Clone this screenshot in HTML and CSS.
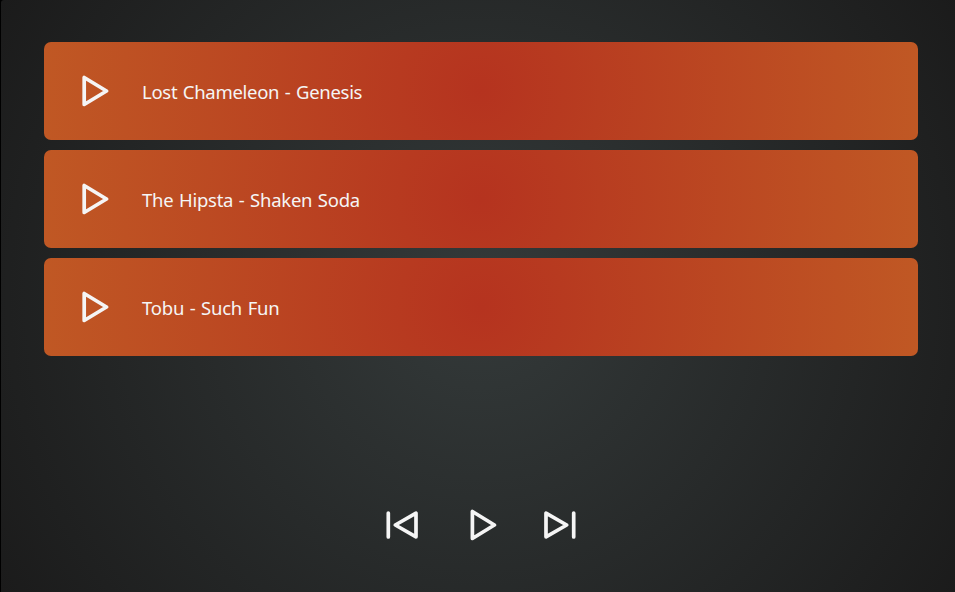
FILE: index.html
```html
<!DOCTYPE html>
<html lang="en">
<head>
<meta charset="utf-8">
<title>Music player</title>
<link rel="stylesheet" href="styles.css">
</head>
<body>
<main class="player">
  <ul class="tracks">
    <li class="track">
      <svg class="icon" viewBox="0 0 32 32"><path d="M4.2 2.5V29.5L26.5 16Z"/></svg>
      <span class="title title-genesis">Lost Chameleon - Genesis</span>
    </li>
    <li class="track">
      <svg class="icon" viewBox="0 0 32 32"><path d="M4.2 2.5V29.5L26.5 16Z"/></svg>
      <span class="title title-soda">The Hipsta - Shaken Soda</span>
    </li>
    <li class="track">
      <svg class="icon" viewBox="0 0 32 32"><path d="M4.2 2.5V29.5L26.5 16Z"/></svg>
      <span class="title title-fun">Tobu - Such Fun</span>
    </li>
  </ul>
  <div class="controls">
    <svg class="icon" viewBox="0 0 32 32"><path d="M2.3 4V28M30 4.2V27.8L9.3 16Z"/></svg>
    <svg class="icon" viewBox="0 0 32 32"><path d="M7.4 2.5V29.5L29.4 16Z"/></svg>
    <svg class="icon" viewBox="0 0 32 32"><path d="M29.7 4V28M2 4.2V27.8L22.7 16Z"/></svg>
  </div>
</main>
</body>
</html>
```
FILE: styles.css
```css
* { box-sizing: border-box; }
body {
  margin: 0;
  background: #000;
  font-family: "Segoe UI", "Noto Sans", "Open Sans", sans-serif;
}
.player {
  height: 592px;
  margin-left: 1px;
  padding: 42px 37px 0 43px;
  border-top-left-radius: 3px;
  background: radial-gradient(circle at 480px 296px, #343a3a, #1b1b1b);
}
.tracks {
  display: grid;
  gap: 10px;
  margin: 0;
  padding: 0;
  list-style: none;
}
.track {
  display: flex;
  align-items: center;
  height: 98px;
  padding-left: 36px;
  border-radius: 7px;
  background: radial-gradient(circle, #b5331f, #c05824);
}
.icon {
  flex: none;
  width: 32px;
  height: 32px;
  fill: none;
  stroke: #f5f5f5;
  stroke-width: 3.7;
  stroke-linecap: round;
  stroke-linejoin: round;
}
.title {
  margin-left: 30px;
  padding-top: 2px;
  color: #f5f5f5;
  font-size: 18.5px;
  line-height: 26px;
  word-spacing: 1px;
  white-space: nowrap;
}
.title-genesis { letter-spacing: -0.29px; }
.title-soda { letter-spacing: -0.25px; }
.title-fun { letter-spacing: -0.22px; }
.controls {
  display: flex;
  justify-content: center;
  gap: 47px;
  margin-top: 153px;
}
```
